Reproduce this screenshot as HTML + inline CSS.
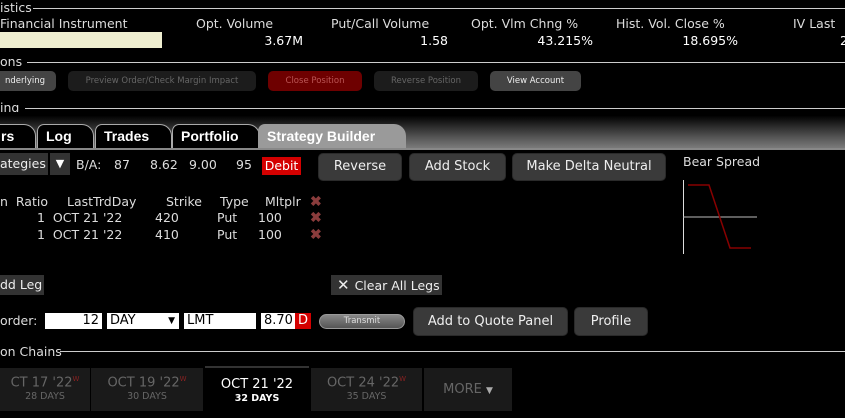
<!DOCTYPE html>
<html><head><meta charset="utf-8"><style>
body{margin:0;width:845px;height:416px;background:#000;overflow:hidden;position:relative;font-family:"DejaVu Sans","Liberation Sans",sans-serif;color:#ddd;font-size:12.5px}
.a{position:absolute;white-space:nowrap}
.ln{position:absolute;height:1px;background:#ccc}
.b{position:absolute;border-radius:5px;text-align:center;font-size:8.5px;line-height:20px}
.btn{position:absolute;background:#3a3a3a;border-radius:5px;text-align:center;color:#eee;font-size:13px;border:1px solid #2a2a2a}
.tab{position:absolute;top:124px;height:24px;background:#000;border:1px solid #aaa;border-bottom:none;border-radius:7px 12px 0 0;color:#fff;font-weight:bold;font-family:"Liberation Sans",sans-serif;font-size:14px;line-height:23px;padding-left:8px;box-sizing:border-box}
.inp{position:absolute;background:#fff;color:#000;height:16px;line-height:16px;font-size:13px;top:313px}
.ct{position:absolute;top:368px;height:43px;background:#1a1a1a;text-align:center;color:#666;font-size:13px}
.ct small{display:block;font-size:9.5px;margin-top:1px}
.x{color:#8a3c3c;font-weight:bold;font-size:14px;font-family:"Liberation Sans",sans-serif}
</style></head><body>
<div class="a" style="left:0;top:0;font-size:12.5px">istics</div><div class="ln" style="left:33px;right:0;top:8px"></div>
<div class="a" style="left:0;top:16px">Financial Instrument</div>
<div class="a" style="left:196px;top:16px">Opt. Volume</div>
<div class="a" style="left:331px;top:16px">Put/Call Volume</div>
<div class="a" style="left:471px;top:16px">Opt. Vlm Chng %</div>
<div class="a" style="left:616px;top:16px">Hist. Vol. Close %</div>
<div class="a" style="left:793px;top:16px">IV Last</div>
<div class="a" style="left:0;top:32px;width:162px;height:16px;background:#efeed0"></div>
<div class="a" style="right:542px;top:33px;color:#fff">3.67M</div>
<div class="a" style="right:397px;top:33px;color:#fff">1.58</div>
<div class="a" style="right:252px;top:33px;color:#fff">43.215%</div>
<div class="a" style="right:107px;top:33px;color:#fff">18.695%</div>
<div class="a" style="left:840px;top:33px;color:#fff">2</div>
<div class="a" style="left:0;top:54px">ons</div><div class="ln" style="left:27px;right:0;top:62px"></div>
<div class="b" style="left:-6px;top:71px;width:62px;height:20px;background:#444;color:#eee">nderlying</div>
<div class="b" style="left:68px;top:71px;width:188px;height:20px;background:#1c1c1c;color:#666">Preview Order/Check Margin Impact</div>
<div class="b" style="left:268px;top:71px;width:94px;height:20px;background:#6e0000;color:#b55">Close Position</div>
<div class="b" style="left:374px;top:71px;width:104px;height:20px;background:#1c1c1c;color:#666">Reverse Position</div>
<div class="b" style="left:490px;top:71px;width:91px;height:20px;background:#444;color:#eee">View Account</div>
<div class="a" style="left:0;top:100px">ing</div><div class="ln" style="left:25px;right:0;top:108px"></div>
<div class="a" style="left:0;top:112px;width:845px;height:36px;background:linear-gradient(#000,#000 10%,#555 70%,#7a7a7a)"></div>
<div class="tab" style="left:-10px;width:46px;padding-left:10px">rs</div>
<div class="tab" style="left:37px;width:57px">Log</div>
<div class="tab" style="left:95px;width:77px">Trades</div>
<div class="tab" style="left:172px;width:88px">Portfolio</div>
<div class="tab" style="left:258px;width:148px;background:#9a9a9a;border-color:#9a9a9a">Strategy Builder</div>
<div class="a" style="left:0;top:148px;width:845px;height:2px;background:#888"></div>
<div class="a" style="left:0;top:153px;width:48px;height:22px;background:#333;color:#eee;line-height:22px">ategies</div>
<div class="a" style="left:50px;top:153px;width:20px;height:22px;background:#333;color:#fff;line-height:22px;text-align:center;font-size:11px">▼</div>
<div class="a" style="left:76px;top:157px">B/A:</div>
<div class="a" style="left:114px;top:157px">87</div>
<div class="a" style="left:150px;top:157px">8.62</div>
<div class="a" style="left:189px;top:157px">9.00</div>
<div class="a" style="left:236px;top:157px">95</div>
<div class="a" style="left:262px;top:157px;width:39px;height:18px;background:#d40000;color:#fff;text-align:center;line-height:18px">Debit</div>
<div class="btn" style="left:318px;top:153px;width:82px;height:26px;line-height:26px">Reverse</div>
<div class="btn" style="left:409px;top:153px;width:95px;height:26px;line-height:26px">Add Stock</div>
<div class="btn" style="left:512px;top:153px;width:152px;height:26px;line-height:26px">Make Delta Neutral</div>
<div class="a" style="left:683px;top:154px">Bear Spread</div>
<svg class="a" style="left:680px;top:178px" width="80" height="80"><line x1="3.5" y1="2" x2="3.5" y2="76" stroke="#ddd"/><line x1="3" y1="39" x2="77" y2="39" stroke="#bbb"/><polyline points="8,7 29,7 50,70 71,70" fill="none" stroke="#800" stroke-width="1.5"/></svg>
<div class="a" style="left:0;top:194px">n&nbsp; Ratio</div>
<div class="a" style="left:67px;top:194px">LastTrdDay</div>
<div class="a" style="left:166px;top:194px">Strike</div>
<div class="a" style="left:220px;top:194px">Type</div>
<div class="a" style="left:265px;top:194px">Mltplr</div>
<div class="a x" style="left:310px;top:193px">✖</div>
<div class="a" style="left:37px;top:210px">1&nbsp; OCT 21 '22</div><div class="a" style="left:155px;top:210px">420</div><div class="a" style="left:217px;top:210px">Put</div><div class="a" style="left:258px;top:210px">100</div><div class="a x" style="left:310px;top:209px">✖</div>
<div class="a" style="left:37px;top:227px">1&nbsp; OCT 21 '22</div><div class="a" style="left:155px;top:227px">410</div><div class="a" style="left:217px;top:227px">Put</div><div class="a" style="left:258px;top:227px">100</div><div class="a x" style="left:310px;top:226px">✖</div>
<div class="a" style="left:0;top:275px;width:44px;height:20px;background:#333;line-height:20px;color:#eee">dd Leg</div>
<div class="a" style="left:331px;top:275px;width:111px;height:20px;background:#333;line-height:20px;color:#eee"><span style="font-size:15px;margin:0 5px 0 6px">✕</span>Clear All Legs</div>
<div class="a" style="left:0;top:313px">order:</div>
<div class="inp" style="left:45px;width:54px;text-align:right;padding-right:3px">12</div>
<div class="inp" style="left:107px;width:69px;padding-left:3px">DAY<span style="position:absolute;right:4px;font-size:9px">▼</span></div>
<div class="inp" style="left:184px;width:69px;padding-left:3px">LMT</div>
<div class="inp" style="left:261px;width:31px;padding-left:3px">8.70</div>
<div class="inp" style="left:295px;width:16px;background:#d40000;color:#fff;text-align:center">D</div>
<div class="a" style="left:319px;top:314px;width:84px;height:13px;border:1px solid #999;border-radius:8px;background:linear-gradient(#888,#555);color:#ddd;font-size:8.5px;text-align:center;line-height:13px">Transmit</div>
<div class="btn" style="left:413px;top:307px;width:153px;height:27px;line-height:27px">Add to Quote Panel</div>
<div class="btn" style="left:574px;top:307px;width:72px;height:27px;line-height:27px">Profile</div>
<div class="a" style="left:0;top:344px">on Chains</div><div class="ln" style="left:60px;right:0;top:351px"></div>
<div class="ct" style="left:0;width:90px;padding-top:7px;height:36px">CT 17 '22<sup style="color:#822;font-size:7px">W</sup><small>28 DAYS</small></div>
<div class="ct" style="left:91px;width:112px;padding-top:7px;height:36px">OCT 19 '22<sup style="color:#822;font-size:7px">W</sup><small>30 DAYS</small></div>
<div class="ct" style="left:205px;top:366px;width:104px;padding-top:9px;height:41px;background:#000;border-top:2px solid #333;color:#fff">OCT 21 '22<small style="font-weight:bold">32 DAYS</small></div>
<div class="ct" style="left:311px;width:111px;padding-top:7px;height:36px">OCT 24 '22<sup style="color:#822;font-size:7px">W</sup><small>35 DAYS</small></div>
<div class="ct" style="left:424px;width:88px;line-height:43px">MORE <span style="font-size:9px;color:#aaa">▼</span></div>
</body></html>
